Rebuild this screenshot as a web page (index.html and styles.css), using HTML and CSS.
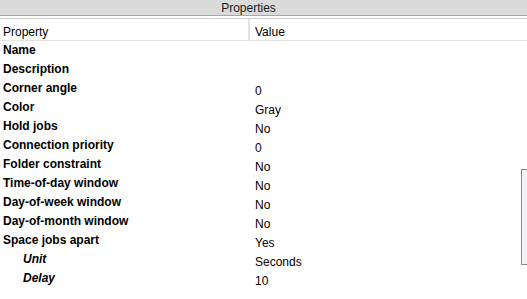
FILE: index.html
```html
<!DOCTYPE html>
<html>
  <head>
    <title>Properties</title>
    <link rel="stylesheet" href="styles.css">
  </head>
  <body>
    <div class="panel">
      <div class="title">Properties</div>
      <div class="grid">
        <div class="head">
          <div class="cell name">Property</div>
          <div class="cell value">Value</div>
        </div>
        <div class="row"><div class="cell name">Name</div><div class="cell value"></div></div>
        <div class="row"><div class="cell name">Description</div><div class="cell value"></div></div>
        <div class="row"><div class="cell name">Corner angle</div><div class="cell value">0</div></div>
        <div class="row"><div class="cell name">Color</div><div class="cell value">Gray</div></div>
        <div class="row"><div class="cell name">Hold jobs</div><div class="cell value">No</div></div>
        <div class="row"><div class="cell name">Connection priority</div><div class="cell value">0</div></div>
        <div class="row"><div class="cell name">Folder constraint</div><div class="cell value">No</div></div>
        <div class="row"><div class="cell name">Time-of-day window</div><div class="cell value">No</div></div>
        <div class="row"><div class="cell name">Day-of-week window</div><div class="cell value">No</div></div>
        <div class="row"><div class="cell name">Day-of-month window</div><div class="cell value">No</div></div>
        <div class="row"><div class="cell name">Space jobs apart</div><div class="cell value">Yes</div></div>
        <div class="row sub"><div class="cell name">Unit</div><div class="cell value">Seconds</div></div>
        <div class="row sub"><div class="cell name">Delay</div><div class="cell value">10</div></div>
      </div>
      <div class="scroll"></div>
    </div>
  </body>
</html>
```

FILE: styles.css
```css
* {
  box-sizing: border-box;
  margin: 0;
  padding: 0;
}

body {
  font-family: "Liberation Sans", Arial, sans-serif;
  font-size: 12px;
  color: #000;
  background: #fff;
}

.panel {
  position: relative;
  width: 527px;
  height: 299px;
  overflow: hidden;
}

/* title bar */
.title {
  height: 16px;
  line-height: 17px;
  padding-right: 30px;
  text-align: center;
  background: #dadada;
  border-bottom: 1px solid #a8a8a8;
  color: #1a1a1a;
}

.grid {
  border-top: 2px solid #fff;
}

.head {
  display: flex;
  height: 23px;
  padding-top: 4px;
  border-top: 1px solid #c8c8c8;
  border-bottom: 1px solid #e3e3e3;
}

.head .cell {
  line-height: 18px;
}

.head .name {
  border-right: 2px solid #e3e3e3;
  margin-top: -4px;
  padding-top: 4px;
}

.row {
  display: flex;
  height: 19px;
  padding-top: 2px;
}

.cell.name {
  width: 250px;
  padding-left: 3px;
}

.cell.value {
  flex: 1;
  padding-left: 5px;
}

.row .name {
  font-weight: bold;
  line-height: 15px;
}

.row .value {
  line-height: 15px;
  padding-top: 3px;
}

.row.sub .name {
  font-style: italic;
  padding-left: 23px;
}

.scroll {
  position: absolute;
  left: 521px;
  top: 169px;
  width: 8px;
  height: 96px;
  border: 1px solid #8a8a8a;
  background: #f2f2f8;
}
```
